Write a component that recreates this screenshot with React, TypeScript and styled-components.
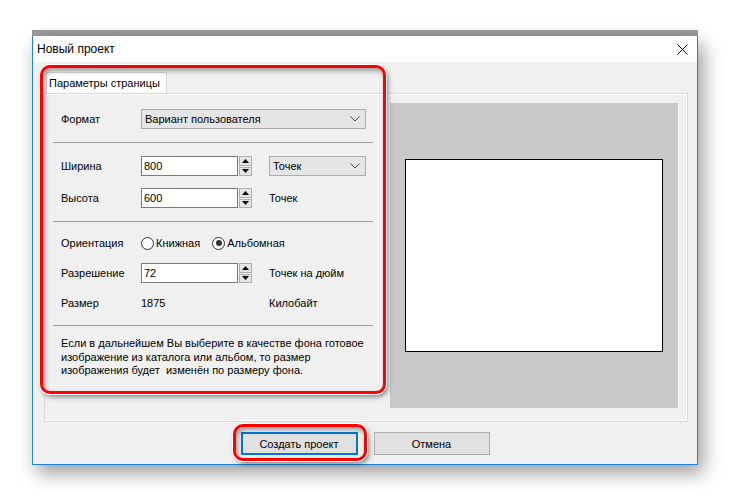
import React from 'react';
import styled, { createGlobalStyle } from 'styled-components';

const Global = createGlobalStyle`
  html, body { margin: 0; padding: 0; background: #ffffff; }
  body {
    width: 730px; height: 497px; overflow: hidden;
    font-family: "Liberation Sans", Arial, sans-serif;
    font-size: 11px; color: #000;
  }
  * { box-sizing: border-box; }
`;

const Page = styled.div`
  width: 730px;
  height: 497px;
  padding: 30px 0 0 32px;
  display: flex;
  flex-direction: column;
`;

const BehindBar = styled.div`
  width: 666px;
  height: 6px;
  background: #9c9c9c;
`;

const Window = styled.div`
  width: 666px;
  height: 429px;
  border: 1px solid #1883d7;
  border-top: none;
  background: #f0f0f0;
  display: flex;
  flex-direction: column;
  box-shadow: 5px 8px 18px rgba(0, 0, 0, 0.4);
`;

const TitleBar = styled.div`
  height: 26px;
  background: #ffffff;
  display: flex;
  align-items: center;
  padding-left: 4px;
  font-size: 12px;
`;

const Title = styled.div`
  flex: 1;
`;

const CloseBtn = styled.div`
  width: 30px;
  height: 26px;
  display: flex;
  align-items: center;
  justify-content: center;
`;

const Body = styled.div`
  flex: 1;
  display: flex;
  flex-direction: column;
  padding: 10px 9px 9px 11px;
`;

const TabControl = styled.div`
  position: relative;
  height: 350px;
  display: flex;
  flex-direction: column;
`;

const TabStrip = styled.div`
  height: 21px;
  display: flex;
  padding-left: 2px;
`;

const Tab = styled.div`
  width: 121px;
  height: 21px;
  background: #ffffff;
  border: 1px solid #d9d9d9;
  border-bottom: none;
  padding-left: 2px;
  padding-bottom: 1px;
  display: flex;
  align-items: center;
  white-space: nowrap;
  position: relative;
  z-index: 1;
  margin-bottom: -1px;
`;

const TabPanel = styled.div`
  flex: 1;
  border: 1px solid #d9d9d9;
  background: #f0f0f0;
  box-shadow: inset 0 1px 0 #ffffff, inset -1px -1px 0 #ffffff;
  display: flex;
`;

const FormColumn = styled.div`
  width: 336px;
  display: flex;
  flex-direction: column;
  padding: 15px 8px 0 8px;
`;

const Row = styled.div<{ $mt?: number }>`
  display: flex;
  align-items: center;
  height: 20px;
  padding-left: 8px;
  white-space: nowrap;
  margin-top: ${(p) => p.$mt ?? 0}px;
`;

const Label = styled.div`
  width: 80px;
`;

const Value = styled.div`
  width: 128px;
`;

const Separator = styled.div<{ $mt: number }>`
  height: 1px;
  background: #a0a0a0;
  margin-top: ${(p) => p.$mt}px;
`;

const Select = styled.div<{ $w: number }>`
  width: ${(p) => p.$w}px;
  height: 20px;
  background: #e5e5e5;
  border: 1px solid #acacac;
  display: flex;
  align-items: center;
  justify-content: space-between;
  padding: 0 5px 0 3px;
`;

const TextInput = styled.div`
  width: 97px;
  height: 20px;
  background: #ffffff;
  border: 1px solid #7a7a7a;
  display: flex;
  align-items: center;
  padding-left: 2px;
`;

const Spinner = styled.div`
  width: 13px;
  height: 20px;
  margin-left: 1px;
  display: flex;
  flex-direction: column;
  gap: 1px;
`;

const SpinBtn = styled.div`
  flex: 1;
  background: #e5e5e5;
  border: 1px solid #acacac;
  display: flex;
  align-items: center;
  justify-content: center;
`;

const Unit = styled.div`
  margin-left: 17px;
`;

const RadioItem = styled.div<{ $ml?: number }>`
  display: flex;
  align-items: center;
  gap: 2px;
  margin-left: ${(p) => p.$ml ?? 0}px;
`;

const RadioCircle = styled.div<{ $checked?: boolean }>`
  width: 13px;
  height: 13px;
  border-radius: 50%;
  border: 1px solid #333333;
  background: #ffffff;
  display: flex;
  align-items: center;
  justify-content: center;
  &::after {
    content: '';
    width: 6px;
    height: 6px;
    border-radius: 50%;
    background: ${(p) => (p.$checked ? '#333333' : 'transparent')};
  }
`;

const Note = styled.div`
  margin-top: 11px;
  padding-left: 8px;
  line-height: 13.5px;
  white-space: pre;
`;

const Preview = styled.div`
  flex: 1;
  margin: 9px 9px 13px 9px;
  background: #c8c8c8;
  display: flex;
  align-items: center;
  justify-content: center;
`;

const Sheet = styled.div`
  width: 258px;
  height: 193px;
  background: #ffffff;
  border: 1px solid #000000;
`;

const ButtonRow = styled.div`
  margin-top: 10px;
  height: 23px;
  display: flex;
  justify-content: center;
  gap: 16px;
  padding-right: 2px;
`;

const Button = styled.div<{ $primary?: boolean; $w: number }>`
  position: relative;
  width: ${(p) => p.$w}px;
  height: 23px;
  background: #e1e1e1;
  border: ${(p) => (p.$primary ? '2px solid #0078d7' : '1px solid #adadad')};
  display: flex;
  align-items: center;
  justify-content: center;
`;

const Highlight = styled.div<{ $l: number; $t: number; $r: number; $b: number }>`
  position: absolute;
  left: ${(p) => p.$l}px;
  top: ${(p) => p.$t}px;
  right: ${(p) => p.$r}px;
  bottom: ${(p) => p.$b}px;
  border: 3px solid #ff0000;
  border-radius: 10px;
  pointer-events: none;
  box-shadow: 0 0 0 1px #ffffff, 2px 3px 5px rgba(0, 0, 0, 0.45),
    inset 2px 3px 5px rgba(0, 0, 0, 0.35);
  z-index: 5;
`;

const Chevron = () => (
  <svg width="10" height="6" viewBox="0 0 10 6">
    <polyline points="0.5,0.5 5,5 9.5,0.5" fill="none" stroke="#444" strokeWidth="1" />
  </svg>
);

const ArrowUp = () => (
  <svg width="7" height="4" viewBox="0 0 7 4">
    <polygon points="3.5,0 7,4 0,4" fill="#000" />
  </svg>
);

const ArrowDown = () => (
  <svg width="7" height="4" viewBox="0 0 7 4">
    <polygon points="0,0 7,0 3.5,4" fill="#000" />
  </svg>
);

const SpinBox = ({ value }: { value: string }) => (
  <>
    <TextInput>{value}</TextInput>
    <Spinner>
      <SpinBtn>
        <ArrowUp />
      </SpinBtn>
      <SpinBtn>
        <ArrowDown />
      </SpinBtn>
    </Spinner>
  </>
);

export default function App() {
  return (
    <Page>
      <Global />
      <BehindBar />
      <Window>
        <TitleBar>
          <Title>Новый проект</Title>
          <CloseBtn>
            <svg width="11" height="11" viewBox="0 0 11 11">
              <path d="M0.5 0.5 L10.5 10.5 M10.5 0.5 L0.5 10.5" stroke="#000" strokeWidth="1" />
            </svg>
          </CloseBtn>
        </TitleBar>
        <Body>
          <TabControl>
            <TabStrip>
              <Tab>Параметры страницы</Tab>
            </TabStrip>
            <TabPanel>
              <FormColumn>
                <Row>
                  <Label>Формат</Label>
                  <Select $w={225}>
                    <span>Вариант пользователя</span>
                    <Chevron />
                  </Select>
                </Row>
                <Separator $mt={13} />
                <Row $mt={13}>
                  <Label>Ширина</Label>
                  <SpinBox value="800" />
                  <Unit>
                    <Select $w={97}>
                      <span>Точек</span>
                      <Chevron />
                    </Select>
                  </Unit>
                </Row>
                <Row $mt={12}>
                  <Label>Высота</Label>
                  <SpinBox value="600" />
                  <Unit>Точек</Unit>
                </Row>
                <Separator $mt={13} />
                <Row $mt={11}>
                  <Label>Ориентация</Label>
                  <RadioItem>
                    <RadioCircle />
                    <span>Книжная</span>
                  </RadioItem>
                  <RadioItem $ml={12}>
                    <RadioCircle $checked />
                    <span>Альбомная</span>
                  </RadioItem>
                </Row>
                <Row $mt={10}>
                  <Label>Разрешение</Label>
                  <SpinBox value="72" />
                  <Unit>Точек на дюйм</Unit>
                </Row>
                <Row $mt={10}>
                  <Label>Размер</Label>
                  <Value>1875</Value>
                  <span>Килобайт</span>
                </Row>
                <Separator $mt={12} />
                <Note>
                  {'Если в дальнейшем Вы выберите в качестве фона готовое\nизображение из каталога или альбом, то размер\nизображения будет  изменён по размеру фона.'}
                </Note>
              </FormColumn>
              <Preview>
                <Sheet />
              </Preview>
            </TabPanel>
            <Highlight $l={-4} $t={-7} $r={302} $b={28} />
          </TabControl>
          <ButtonRow>
            <Button $primary $w={117}>
              Создать проект
              <Highlight $l={-10} $t={-10} $r={-11} $b={-8} />
            </Button>
            <Button $w={116}>Отмена</Button>
          </ButtonRow>
        </Body>
      </Window>
    </Page>
  );
}
